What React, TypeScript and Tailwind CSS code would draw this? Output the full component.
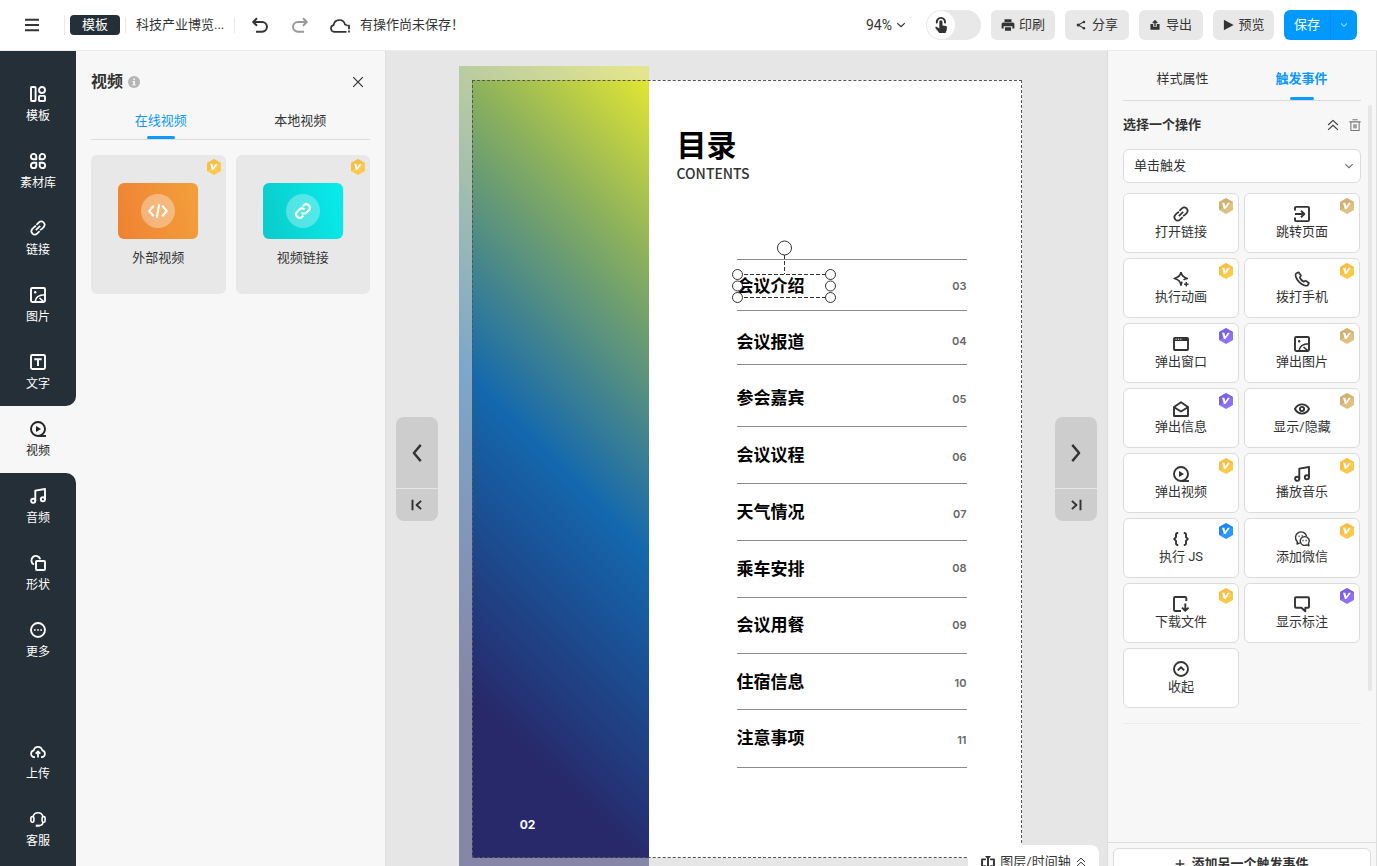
import { useState, type ReactNode } from "react";

type GlyphProps = { name: string; className?: string };

const glyphs: Record<string, ReactNode> = {
  template: (
    <>
      <rect x="1" y="1" width="4.600" height="14" rx="0.800" />
      <circle cx="12" cy="4" r="3" />
      <rect x="9" y="9.900" width="6" height="5.100" rx="0.800" />
    </>
  ),
  material: (
    <>
      <path d="M6.3 6.3H3.6A2.7 2.7 0 1 1 6.3 3.6z" />
      <path d="M9.7 6.3h2.7a2.7 2.7 0 1 0-2.7-2.7z" />
      <path d="M6.3 9.7H3.6a2.7 2.7 0 1 0 2.7 2.7z" />
      <path d="M9.7 9.7h2.7a2.7 2.7 0 1 1-2.7 2.7z" />
    </>
  ),
  link: (
    <g strokeWidth="1.700">
      <path d="M6.4 4.800 8.900 2.300a3.400 3.400 0 0 1 4.800 4.800l-1.800 1.800a3.300 3.300 0 0 1-2 .9" />
      <path d="M9.600 11.200 7.100 13.700a3.400 3.400 0 0 1-4.800-4.800l1.800-1.800a3.300 3.300 0 0 1 2-.9" />
      <path d="M5.800 10.200l4.400-4.400" />
    </g>
  ),
  chain: (
    <>
      <path d="M6.5 9.2a3.2 3.2 0 0 0 4.7.2l2.2-2.2a3.2 3.2 0 0 0-4.5-4.5L7.7 3.9" />
      <path d="M9.5 6.8a3.2 3.2 0 0 0-4.7-.2L2.6 8.8a3.2 3.2 0 0 0 4.5 4.5l1.2-1.2" />
    </>
  ),
  image: (
    <>
      <rect x="1" y="1" width="14" height="14" rx="1.200" />
      <circle cx="5.200" cy="5.200" r="1.200" fill="currentColor" stroke="none" />
      <path d="M5 15c.5-4.500 4-7.200 10-7.200M9.500 11l4.500 3.800" strokeWidth="1.600" />
    </>
  ),
  text: (
    <>
      <rect x="1" y="1" width="14" height="14" rx="1.200" />
      <path d="M4.300 5.200h7.400M8 5v7" />
    </>
  ),
  video: (
    <>
      <circle cx="8" cy="8" r="7" />
      <path d="M6 5v6L11 8z" fill="currentColor" stroke="none" />
      <path d="M9 15h7" />
    </>
  ),
  music: (
    <>
      <circle cx="3.200" cy="12.800" r="2.100" />
      <circle cx="12.900" cy="11.300" r="2.100" />
      <path d="M5.300 12.800V2.600L15 1v10.300" />
    </>
  ),
  shapes: (
    <>
      <rect x="6" y="6" width="9" height="9" rx="0.800" />
      <path d="M4 9.500a4.500 4.500 0 1 1 6.200-5.300" />
    </>
  ),
  more: (
    <>
      <circle cx="8" cy="8" r="7" />
      <path d="M4 7.200h1.700v1.600H4zM7.150 7.200h1.700v1.600h-1.700zM10.300 7.200h1.700v1.600h-1.700z" fill="currentColor" stroke="none" />
    </>
  ),
  upload: (
    <g strokeWidth="1.700">
      <path d="M5 13.200H4.300a3.500 3.500 0 0 1-.5-6.900 4.300 4.300 0 0 1 8.400 0 3.500 3.500 0 0 1-.5 6.900H11" />
      <path d="M8 13.500V7.500M5.700 9.600 8 7.300l2.300 2.300" />
    </g>
  ),
  service: (
    <g strokeWidth="1.600">
      <path d="M3 5.800a5.100 5.100 0 0 1 10 0M13 11c0 2.300-1.500 3.500-4 3.700" />
      <rect x="0.900" y="5.600" width="3" height="5.600" rx="1.400" />
      <rect x="12.100" y="5.600" width="3" height="5.600" rx="1.400" />
      <path d="M5.800 14.700h3.600" strokeWidth="2.200" />
    </g>
  ),
  jump: (
    <>
      <path d="M1 4.500V1.900a1 1 0 0 1 1-1h12a1 1 0 0 1 1 1v12.200a1 1 0 0 1-1 1H2a1 1 0 0 1-1-1v-2.600" />
      <path d="M1 8h8.500M7 4.800 10.300 8 7 11.200" />
    </>
  ),
  sparkle: (
    <>
      <path d="M8 1.200c.6 3.600 2.200 5.200 6.300 6.300-1.800.4-2.900.8-3.800 1.400M9.200 10.600C8.600 11.500 8.300 12.600 8 14.200 7.400 10.200 5.400 8.400 1.200 7.500 5.400 6.400 7.400 4.800 8 1.200" strokeWidth="1.700" />
      <path d="M13.300 11v4.400M11.100 13.200h4.400" strokeWidth="1.400" />
    </>
  ),
  phone: (
    <path
      strokeWidth="1.700"
      d="M4.600 1.300 2 2.600C.7 3.600 2 7.600 5 10.800c3.200 3.200 7.400 4.800 8.700 3.500l1.200-2.300-3.300-2.400-1.800 1.200c-1.600-.8-3.300-2.600-4-4.200L7 4.600z"
    />
  ),
  window: (
    <>
      <rect x="1" y="2" width="14" height="12" rx="0.800" />
      <path d="M1 2h14v3H1z" fill="currentColor" stroke="none" />
      <path d="M2.500 3.200h1.200M4.900 3.200h1.200M7.300 3.200h1.200" stroke="#fff" strokeWidth="1" />
    </>
  ),
  mail: (
    <>
      <path d="M1 6 8 1.300 15 6v9H1z" />
      <path d="m1.500 6.500 6.500 4 6.500-4" />
    </>
  ),
  eye: (
    <>
      <path d="M.9 8C2.600 5 5 3.400 8 3.400S13.400 5 15.100 8C13.400 11 11 12.600 8 12.600S2.600 11 .9 8z" />
      <circle cx="8" cy="8" r="2.100" />
    </>
  ),
  braces: (
    <path d="M5.200 2H4.400a1.400 1.400 0 0 0-1.400 1.400v2.800L1.200 8 3 9.800v2.800A1.400 1.400 0 0 0 4.400 14h.8M10.800 2h.8A1.400 1.400 0 0 1 13 3.400v2.800L14.800 8 13 9.800v2.800a1.400 1.400 0 0 1-1.400 1.400h-.8" />
  ),
  wechat: (
    <g strokeWidth="1.400">
      <path d="M5.800 11.800 3 13l.4-2.300A5.600 5.600 0 1 1 12.600 5.500" />
      <path d="M10.600 5.600a4.600 4.400 0 1 0 2.300 8.300l2 .9-.4-2.100a4.500 4.500 0 0 0-3.900-7.100z" />
      <path d="M4.600 5.300h1M7.700 4.700h1M8.500 9.500h1.100M11.600 9.500h1.100" />
    </g>
  ),
  download: (
    <>
      <path d="M8 15H2.200A1.200 1.200 0 0 1 1 13.800V2.200A1.200 1.200 0 0 1 2.200 1h9.900a1.200 1.200 0 0 1 1.200 1.200V5" />
      <path d="M12.300 7.500v7.200M9 11.600l3.300 3.200 3.300-3.200" />
    </>
  ),
  callout: <path d="M2 1.200h12a1 1 0 0 1 1 1v8.600a1 1 0 0 1-1 1h-2.700v3.400l-3.900-3.400H2a1 1 0 0 1-1-1V2.200a1 1 0 0 1 1-1z" />,
  collapse: (
    <>
      <circle cx="8" cy="8" r="7" />
      <path d="M4.800 9.400 8 6.300l3.200 3.100" />
    </>
  ),
  code: <path d="M4.600 3.800.9 8l3.700 4.200M11.400 3.800 15.100 8l-3.700 4.200M9 2.500 7 13.500" strokeWidth="1.600" />,
  close: <path d="m2.500 2.500 11 11M13.500 2.500l-11 11" strokeWidth="1.400" />,
  menu: <path d="M0 2h16M0 8h16M0 14h16" strokeWidth="2.200" />,
  undo: <path d="M5 1.200 1.200 5 5 8.800M1.500 5h8.600a4.700 4.700 0 0 1 0 9.700H4" strokeWidth="2" />,
  redo: <path d="M11 1.200 14.800 5 11 8.800M14.500 5H5.900a4.700 4.700 0 0 0 0 9.700H12" strokeWidth="2" />,
  chevronDown: <path d="m2 5 6 5.800L14 5" strokeWidth="1.800" />,
  doubleUp: <path d="m1.500 8 6.500-6.200L14.500 8M1.500 14.500 8 8.300l6.500 6.200" strokeWidth="1.600" />,
  prev: <path d="M11 1.500 5.500 8l5.500 6.500" />,
  next: <path d="m5 1.500 5.500 6.500L5 14.500" />,
  first: <path d="M2 1v14M13.500 2.500 7.500 8l6 5.500" strokeWidth="2.600" />,
  last: <path d="M14 1v14M2.500 2.500l6 5.500-6 5.500" strokeWidth="2.600" />,
  plus: <path d="M8 1v14M1 8h14" strokeWidth="2.200" />,
  trash: (
    <>
      <path d="M.5 3.800h15M4.500 1h7M2.500 4v11.200h11V4" strokeWidth="1.400" />
      <path d="M5.500 7h5v5.500h-5z" fill="currentColor" stroke="none" opacity="0.700" />
    </>
  ),
  printer: (
    <path d="M4 1.500h8v3H4zM2.500 5h11A1.800 1.800 0 0 1 15.300 6.800V12H13V9.500H3V12H.7V6.800A1.800 1.800 0 0 1 2.500 5zM4.500 10.500h7v4h-7z" fill="currentColor" stroke="none" />
  ),
  share: (
    <>
      <path d="M12.500 3 3.500 8l9 5" strokeWidth="1.800" />
      <g fill="currentColor" stroke="none">
        <circle cx="12.700" cy="3" r="2" />
        <circle cx="3.500" cy="8" r="2.500" />
        <circle cx="12.700" cy="13" r="2" />
      </g>
    </>
  ),
  exportBox: (
    <>
      <path d="M.7 6.500h4.400v4.300h5.800V6.500h4.400v9H.7z" fill="currentColor" stroke="none" />
      <path d="M8 9.800V2M4.500 4.800 8 1.300l3.500 3.500" strokeWidth="2.300" />
    </>
  ),
  play: <path d="M2.500 1v14L15.500 8z" fill="currentColor" stroke="none" />,
  touch: (
    <>
      <path d="M3.900 6.400a4.200 4.200 0 1 1 8 0" strokeWidth="1.900" />
      <path d="M6.300 4.900a1.600 1.600 0 0 1 3.200 0v3.500l3.300.7a1.500 1.500 0 0 1 1.200 1.600l-.5 3-1 2.300H6.300L2.500 11.200c-.6-1 .5-1.800 1.400-1.200l2.400 1.500z" fill="currentColor" stroke="none" />
    </>
  ),
  layers: (
    <>
      <path d="M5.600 5H1.200v7.800h4.400M10.400 5h4.400v7.800h-4.400" strokeWidth="2.200" />
      <path d="M8 3.500V16" strokeWidth="2.200" />
      <path d="M4.500 1h7L8 5z" fill="currentColor" stroke="none" />
    </>
  ),
};

function Glyph({ name, className = "size-4" }: GlyphProps) {
  return (
    <svg
      viewBox="0 0 16 16"
      className={`${className} shrink-0 overflow-visible`}
      fill="none"
      stroke="currentColor"
      strokeWidth="1.9"
      strokeLinecap="butt"
      strokeLinejoin="round"
      aria-hidden="true"
    >
      {glyphs[name]}
    </svg>
  );
}

type Tier = "gold" | "tan" | "violet" | "blue";

const tierColors: Record<Tier, [string, string]> = {
  gold: ["#fbc94c", "#f5b53b"],
  tan: ["#dfc083", "#c5a263"],
  violet: ["#8f72f4", "#6a50d6"],
  blue: ["#2f95ff", "#0c78ea"],
};

function Badge({ tier }: { tier: Tier }) {
  const [light, dark] = tierColors[tier];
  return (
    <svg viewBox="0 0 14 16" className="absolute top-1 right-[5px] h-4 w-3.5" aria-hidden="true">
      <path d="M7 0l7 4v8l-7 4-7-4V4z" fill={light} />
      <path d="M0 4l7-4 7 4L0 12z" fill={dark} opacity="0.500" />
      <path d="M3 4.800h2.400l.8 3.700L8.800 4.800H11l-4.700 6.200H4.900z" fill="#fff" />
    </svg>
  );
}

const navTop = [
  ["template", "模板"],
  ["material", "素材库"],
  ["link", "链接"],
  ["image", "图片"],
  ["text", "文字"],
];
const navMiddle = [
  ["music", "音频"],
  ["shapes", "形状"],
  ["more", "更多"],
];
const navBottom = [
  ["upload", "上传"],
  ["service", "客服"],
];

function NavItem({ icon, label }: { icon: string; label: string }) {
  return (
    <button type="button" className="flex h-[67px] w-full flex-col items-center gap-1 pt-[15px] text-xs leading-5">
      <Glyph name={icon} />
      <span>{label}</span>
    </button>
  );
}

function Sidebar() {
  return (
    <nav className="flex w-[76px] shrink-0 flex-col bg-[#f7f7f7] text-white">
      <div className="rounded-br-[10px] bg-[#252f38] pt-5">
        {navTop.map(([icon, label]) => (
          <NavItem key={label} icon={icon} label={label} />
        ))}
      </div>
      <div className="text-[#222]">
        <NavItem icon="video" label="视频" />
      </div>
      <div className="flex flex-1 flex-col justify-between rounded-tr-[10px] bg-[#252f38] pb-[3px]">
        <div>
          {navMiddle.map(([icon, label]) => (
            <NavItem key={label} icon={icon} label={label} />
          ))}
        </div>
        <div>
          {navBottom.map(([icon, label]) => (
            <NavItem key={label} icon={icon} label={label} />
          ))}
        </div>
      </div>
    </nav>
  );
}

function Header() {
  const [touch, setTouch] = useState(false);
  return (
    <header className="flex h-[51px] shrink-0 items-center border-b border-[#ececec] bg-white pr-5 pl-[25px]">
      <button type="button" aria-label="菜单">
        <Glyph name="menu" className="size-3.5" />
      </button>
      <div className="ml-[25px] flex items-center border-l border-[#e8e8e8] pl-[5px]">
        <button type="button" className="h-5 w-[50px] rounded-sm bg-[#252f38] text-[13px] leading-5 text-white">
          模板
        </button>
      </div>
      <div className="ml-[5px] w-[110px] border-x border-[#e8e8e8] pl-[10px] text-[13px] leading-4">
        科技产业博览...
      </div>
      <button type="button" aria-label="撤销" className="ml-[17px]">
        <Glyph name="undo" className="size-4" />
      </button>
      <button type="button" aria-label="重做" className="ml-6 text-[#999]">
        <Glyph name="redo" className="size-4" />
      </button>
      <svg viewBox="0 0 20 16" className="ml-[22px] h-4 w-5 shrink-0" fill="none" stroke="currentColor" strokeWidth="1.700" aria-hidden="true">
        <path d="M16.500 14.800H4.200a3.400 3.400 0 0 1-.6-6.700 5.800 5.800 0 0 1 11.400-.6c1.300.3 2.100.7 2.700 1.400" />
        <path d="M19 7.800v4.400M19 13.400v2" strokeWidth="1.800" />
      </svg>
      <span className="ml-[10px] text-[13px] leading-5">有操作尚未保存！</span>

      <div className="ml-auto flex items-center gap-[10px] text-[13px] leading-5">
        <button type="button" className="flex items-center gap-1 pr-[10px] text-sm leading-5">
          94%
          <Glyph name="chevronDown" className="size-2.5" />
        </button>
        <label className="flex h-[30px] w-[55px] cursor-pointer items-center rounded-full bg-[#e8e8e8] px-px">
          <input
            type="checkbox"
            role="switch"
            aria-label="触摸模式"
            className="sr-only"
            checked={touch}
            onChange={(e) => setTouch(e.target.checked)}
          />
          <span className={touch ? "ml-auto flex size-7 items-center justify-center rounded-full bg-white" : "flex size-7 items-center justify-center rounded-full bg-white"}>
            <Glyph name="touch" className="size-4" />
          </span>
        </label>
        <button type="button" className="flex h-[30px] w-16 items-center justify-center gap-1 rounded-md bg-[#e8e8e8]">
          <Glyph name="printer" className="size-3.5" />
          印刷
        </button>
        <button type="button" className="flex h-[30px] w-16 items-center justify-center gap-1.5 rounded-md bg-[#e8e8e8]">
          <Glyph name="share" className="size-2.5" />
          分享
        </button>
        <button type="button" className="flex h-[30px] w-16 items-center justify-center gap-1.5 rounded-md bg-[#e8e8e8]">
          <Glyph name="exportBox" className="size-2.5" />
          导出
        </button>
        <button type="button" className="flex h-[30px] w-[61px] items-center justify-center gap-1 rounded-md bg-[#e8e8e8]">
          <Glyph name="play" className="size-3" />
          预览
        </button>
        <div className="flex h-[30px] w-[73px] overflow-hidden rounded-md bg-[#0099ff] text-white">
          <button type="button" className="w-[46px]">
            保存
          </button>
          <button type="button" aria-label="更多保存选项" className="flex flex-1 items-center justify-center border-l border-[#0a8ae6]">
            <Glyph name="chevronDown" className="size-2" />
          </button>
        </div>
      </div>
    </header>
  );
}

function VideoPanel() {
  return (
    <aside className="flex w-[310px] shrink-0 flex-col border-r border-[#dedede] bg-[#f7f7f7] px-[15px] pt-5">
      <div className="flex h-[22px] items-center">
        <h2 className="text-base leading-[22px] font-bold">视频</h2>
        <svg viewBox="0 0 12 12" className="ml-[5px] size-3" aria-hidden="true">
          <circle cx="6" cy="6" r="6" fill="#b5b5b5" />
          <path d="M5.200 2.500h1.800V4H5.200zM4.500 5h2.500v3.500h.7v1H4.400v-1h.9V6h-.8z" fill="#f7f7f7" />
        </svg>
        <button type="button" aria-label="关闭" className="mr-[5px] ml-auto">
          <Glyph name="close" className="size-3.5" />
        </button>
      </div>
      <div className="mt-4 grid grid-cols-2 border-b border-[#dcdcdc] text-[13px] leading-5">
        <button type="button" className="flex flex-col items-center pt-0.5 text-[#0d99ff]">
          在线视频
          <span className="mt-[5px] h-[3px] w-7 rounded-full bg-[#0d99ff]" />
        </button>
        <button type="button" className="flex flex-col items-center pt-0.5">
          本地视频
        </button>
      </div>
      <div className="mt-[15px] grid grid-cols-2 gap-[10px] text-[13px] leading-5">
        <button type="button" className="relative flex h-[139px] flex-col items-center rounded-md bg-[#e8e8e8] pt-7">
          <span className="flex h-14 w-20 items-center justify-center rounded-md bg-linear-75 from-[#ef8133] to-[#f3a03b] text-white">
            <span className="flex size-[34px] items-center justify-center rounded-full bg-white/35">
              <Glyph name="code" className="size-5" />
            </span>
          </span>
          <span className="mt-[9px]">外部视频</span>
          <Badge tier="gold" />
        </button>
        <button type="button" className="relative flex h-[139px] flex-col items-center rounded-md bg-[#e8e8e8] pt-7">
          <span className="flex h-14 w-20 items-center justify-center rounded-md bg-linear-75 from-[#0bcaca] to-[#08ecec] text-white">
            <span className="flex size-[34px] items-center justify-center rounded-full bg-white/30">
              <Glyph name="chain" className="size-[18px]" />
            </span>
          </span>
          <span className="mt-[9px]">视频链接</span>
          <Badge tier="gold" />
        </button>
      </div>
    </aside>
  );
}

const contents = [
  { title: "会议介绍", page: "03", titleY: 206, pageY: 206 },
  { title: "会议报道", page: "04", titleY: 262, pageY: 261 },
  { title: "参会嘉宾", page: "05", titleY: 318, pageY: 319 },
  { title: "会议议程", page: "06", titleY: 375, pageY: 377 },
  { title: "天气情况", page: "07", titleY: 432, pageY: 434 },
  { title: "乘车安排", page: "08", titleY: 489, pageY: 488 },
  { title: "会议用餐", page: "09", titleY: 545, pageY: 545 },
  { title: "住宿信息", page: "10", titleY: 602, pageY: 603 },
  { title: "注意事项", page: "11", titleY: 658, pageY: 660 },
];
const rules = [179, 230, 284, 346, 403, 460, 517, 573, 629, 687];

function Artboard() {
  return (
    <div className="relative mt-[29px] h-[778px] w-[550px] shrink-0 bg-white text-black">
      <div className="absolute -top-3.5 -bottom-3.5 -left-[13px] w-[190px] bg-[linear-gradient(45deg,#27296a_19%,#1468ae_51%,#86ad60_79%,#dfe434_98%)]" />
      <div className="pointer-events-none absolute inset-0 shadow-[0_0_0_24px_rgba(230,230,230,0.5)]" />
      <p className="absolute top-[735px] left-12 w-4 text-center text-xs leading-5 font-bold text-white font-[Inter,sans-serif]">02</p>
      <h1 className="absolute top-[46px] left-[205px] text-[30px] leading-10 font-bold">目录</h1>
      <p className="absolute top-[83px] left-[205px] text-sm leading-5 font-medium text-[#333] font-['Noto_Sans_CJK_SC',sans-serif]">CONTENTS</p>
      {rules.map((y) => (
        <div key={y} className="absolute left-[265px] h-px w-[230px] bg-[#8c8c8c]" style={{ top: y }} />
      ))}
      {contents.map((row) => (
        <div key={row.page}>
          <p className="absolute left-[265px] -translate-y-1/2 text-[17px] leading-6 font-bold" style={{ top: row.titleY }}>
            {row.title}
          </p>
          <p className="absolute right-[55px] -translate-y-1/2 text-[11px] leading-4 font-semibold text-[#666] font-[Inter,sans-serif]" style={{ top: row.pageY }}>
            {row.page}
          </p>
        </div>
      ))}
      <svg viewBox="0 0 110 70" className="absolute top-[158px] left-[258px] h-[70px] w-[110px]" fill="none" stroke="#333" aria-hidden="true">
        <path d="M8 36.500h93M8 59.500h93M54.500 17v19" strokeDasharray="4 2" />
        <g fill="#fff">
          <circle cx="54.500" cy="10" r="7" />
          <circle cx="7.500" cy="36.500" r="5" />
          <circle cx="7.500" cy="48" r="5" />
          <circle cx="7.500" cy="59.500" r="5" />
          <circle cx="100.500" cy="36.500" r="5" />
          <circle cx="100.500" cy="48" r="5" />
          <circle cx="100.500" cy="59.500" r="5" />
        </g>
      </svg>
      <div className="pointer-events-none absolute inset-0 border border-dashed border-[#555]" />
    </div>
  );
}

function Canvas() {
  return (
    <main className="relative flex min-w-0 flex-1 justify-center overflow-hidden bg-[#e6e6e6]">
      <Artboard />
      <div className="absolute top-[366px] left-[10px] flex w-[42px] flex-col gap-px overflow-hidden rounded-lg">
        <button type="button" aria-label="上一页" className="flex h-[71px] items-center justify-center bg-[#cdcdcd]">
          <Glyph name="prev" className="size-5" />
        </button>
        <button type="button" aria-label="第一页" className="flex h-8 items-center justify-center bg-[#cdcdcd]">
          <Glyph name="first" className="size-3" />
        </button>
      </div>
      <div className="absolute top-[366px] right-[10px] flex w-[42px] flex-col gap-px overflow-hidden rounded-lg">
        <button type="button" aria-label="下一页" className="flex h-[71px] items-center justify-center bg-[#cdcdcd]">
          <Glyph name="next" className="size-5" />
        </button>
        <button type="button" aria-label="最后一页" className="flex h-8 items-center justify-center bg-[#cdcdcd]">
          <Glyph name="last" className="size-3" />
        </button>
      </div>
      <button type="button" className="absolute right-2 -bottom-2 flex h-[29px] w-[131px] items-center justify-center gap-[5px] rounded-t-lg bg-white pt-1 text-[13px] leading-5">
        <Glyph name="layers" className="size-3.5" />
        图层/时间轴
        <Glyph name="doubleUp" className="size-2.5" />
      </button>
    </main>
  );
}

const actions: { icon: string; label: string; tier?: Tier }[] = [
  { icon: "link", label: "打开链接", tier: "tan" },
  { icon: "jump", label: "跳转页面", tier: "tan" },
  { icon: "sparkle", label: "执行动画", tier: "gold" },
  { icon: "phone", label: "拨打手机", tier: "gold" },
  { icon: "window", label: "弹出窗口", tier: "violet" },
  { icon: "image", label: "弹出图片", tier: "tan" },
  { icon: "mail", label: "弹出信息", tier: "violet" },
  { icon: "eye", label: "显示/隐藏", tier: "tan" },
  { icon: "video", label: "弹出视频", tier: "gold" },
  { icon: "music", label: "播放音乐", tier: "gold" },
  { icon: "braces", label: "执行 JS", tier: "blue" },
  { icon: "wechat", label: "添加微信", tier: "gold" },
  { icon: "download", label: "下载文件", tier: "gold" },
  { icon: "callout", label: "显示标注", tier: "violet" },
  { icon: "collapse", label: "收起" },
];

function EventsPanel() {
  return (
    <aside className="relative flex w-[270px] shrink-0 flex-col border-x border-[#dedede] bg-[#f7f7f7] text-[13px] leading-5">
      <div className="mx-[15px] mt-[18px] grid grid-cols-2 border-b border-[#dcdcdc]">
        <button type="button" className="flex flex-col items-center">
          样式属性
        </button>
        <button type="button" className="flex flex-col items-center font-bold text-[#0d99ff]">
          触发事件
          <span className="mt-2 h-[3px] w-6 rounded-full bg-[#0d99ff]" />
        </button>
      </div>
      <div className="flex min-h-0 flex-1 flex-col px-[15px]">
        <div className="mt-[14px] flex items-center">
          <h3 className="font-bold">选择一个操作</h3>
          <button type="button" aria-label="折叠" className="ml-auto text-[#444]">
            <Glyph name="doubleUp" className="size-3" />
          </button>
          <button type="button" aria-label="删除" className="ml-[10px] text-[#777]">
            <Glyph name="trash" className="size-3" />
          </button>
        </div>
        <div className="relative mt-[14px]">
          <select aria-label="触发方式" className="h-[34px] w-full appearance-none rounded-md border border-[#dcdcdc] bg-white px-[10px]">
            <option>单击触发</option>
          </select>
          <span className="pointer-events-none absolute inset-y-0 right-[7px] flex items-center text-[#777]">
            <Glyph name="chevronDown" className="size-2.5" />
          </span>
        </div>
        <div className="mt-[10px] grid grid-cols-2 gap-[5px] pr-px">
          {actions.map((action) => (
            <button
              key={action.label}
              type="button"
              className="relative flex h-[60px] flex-col items-center rounded-md border border-[#dcdcdc] bg-white pt-3"
            >
              <Glyph name={action.icon} className="size-4" />
              <span>{action.label}</span>
              {action.tier && <Badge tier={action.tier} />}
            </button>
          ))}
        </div>
        <hr className="mt-[15px] border-[#ececec]" />
      </div>
      <div className="absolute top-[54px] right-1 h-[586px] w-1 rounded-full bg-[#e6e6e6]" />
      <div className="h-6 shrink-0 border-t border-[#dcdcdc] px-[5px] pt-[5px]">
        <button type="button" className="flex h-8 w-full items-center justify-center gap-1.5 rounded-md border border-[#dcdcdc] bg-white font-bold">
          <Glyph name="plus" className="size-2.5" />
          添加另一个触发事件
        </button>
      </div>
    </aside>
  );
}

export default function App() {
  return (
    <div className="flex h-screen flex-col overflow-hidden bg-white text-[#333] font-[Roboto,'Noto_Sans_CJK_SC',sans-serif]">
      <Header />
      <div className="flex min-h-0 flex-1">
        <Sidebar />
        <VideoPanel />
        <Canvas />
        <EventsPanel />
      </div>
    </div>
  );
}
